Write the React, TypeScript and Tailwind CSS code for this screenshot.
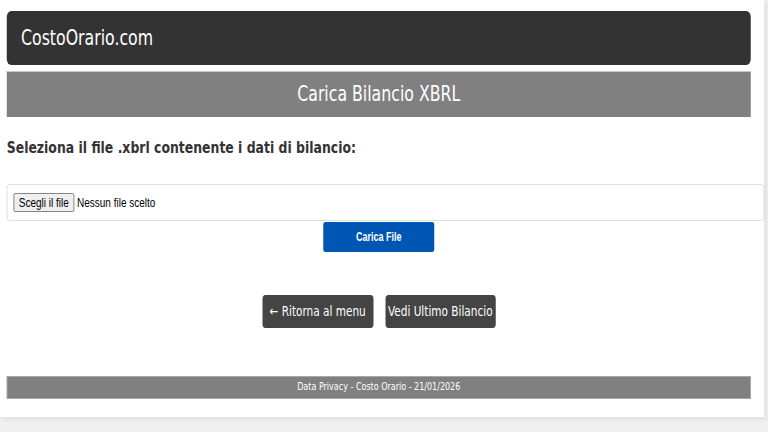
import React from "react";

const dv = { fontFamily: '"DejaVu Sans", Verdana, sans-serif' };
const ar = { fontFamily: '"Liberation Sans", Arial, sans-serif' };

export default function App() {
  return (
    <div className="w-[768px] h-[432px] overflow-hidden bg-[#efefef]">
      <div className="w-[1024px] origin-top-left scale-x-75">
        <div
          className="w-[1019px] bg-white pt-[11px] pb-[18px] pl-[9px] pr-[18px] shadow-[2px_2px_6px_rgba(0,0,0,0.08)]"
          style={dv}
        >
          <div className="w-[992px]">
            <header className="h-[54px] rounded-[6px] bg-[#333333] flex items-center pl-[19px]">
              <span className="text-[21px] text-white leading-none">CostoOrario.com</span>
            </header>

            <div className="mt-[6px] h-[46px] bg-[#808080] border-t border-[#c8c8c8] flex items-center justify-center">
              <h1 className="text-[21px] text-white leading-none">Carica Bilancio XBRL</h1>
            </div>

            <h2 className="mt-[21px] text-[16.6px] leading-[20px] font-bold text-[#333333]">
              Seleziona il file .xbrl contenente i dati di bilancio:
            </h2>

            <div
              className="mt-[26px] w-full box-content px-2 py-2 border border-[#dcdcdc] rounded-[4px] flex items-center"
              style={ar}
            >
              <button className="h-[19px] px-[6px] border border-[#767676] rounded-[2px] bg-[#efefef] text-[13.33px] leading-none text-black">
                Scegli il file
              </button>
              <span className="ml-[4px] text-[13.33px] leading-none text-black">Nessun file scelto</span>
            </div>

            <div className="flex justify-center">
              <button
                className="mt-[1px] w-[148px] h-[30px] rounded-[3px] bg-[#0056b3] text-white text-[12px] font-bold"
                style={ar}
              >
                Carica File
              </button>
            </div>

            <div className="mt-[43px] flex justify-center gap-[16px]">
              <button className="w-[148px] h-[33px] rounded-[4px] bg-[#444444] text-white text-[14px] flex items-center justify-center">
                ← Ritorna al menu
              </button>
              <button className="w-[147px] h-[33px] rounded-[4px] bg-[#444444] text-white text-[14px] flex items-center justify-center">
                Vedi Ultimo Bilancio
              </button>
            </div>

            <footer className="mt-[48px] h-[23px] bg-[#808080] border border-[#a8a8a8] flex items-center justify-center">
              <span className="text-[10.7px] text-white leading-none">Data Privacy - Costo Orario - 21/01/2026</span>
            </footer>
          </div>
        </div>
      </div>
    </div>
  );
}
